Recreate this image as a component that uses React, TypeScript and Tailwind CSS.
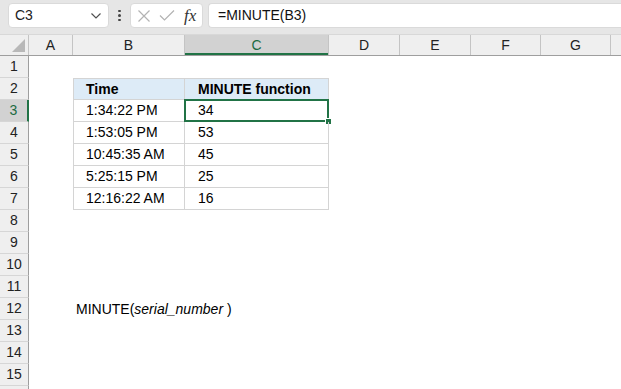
import React from 'react';

const COLS = [
  { key: 'A', w: 'w-[44px]' },
  { key: 'B', w: 'w-[112px]' },
  { key: 'C', w: 'w-[144px]' },
  { key: 'D', w: 'w-[71px]' },
  { key: 'E', w: 'w-[71px]' },
  { key: 'F', w: 'w-[70px]' },
  { key: 'G', w: 'w-[70px]' },
  { key: '', w: 'w-[70px]' },
];

const data: [string, string][] = [
  ['1:34:22 PM', '34'],
  ['1:53:05 PM', '53'],
  ['10:45:35 AM', '45'],
  ['5:25:15 PM', '25'],
  ['12:16:22 AM', '16'],
];

const Chevron = () => (
  <svg width="12" height="8" viewBox="0 0 12 8" fill="none">
    <path d="M1.5 1.5 L6 6 L10.5 1.5" stroke="#505050" strokeWidth="1.2" />
  </svg>
);

const CrossIcon = () => (
  <svg width="14" height="14" viewBox="0 0 14 14" fill="none">
    <path d="M1.5 1.5 L12.5 12.5 M12.5 1.5 L1.5 12.5" stroke="#b3b3b3" strokeWidth="1.2" />
  </svg>
);

const CheckIcon = () => (
  <svg width="16" height="13" viewBox="0 0 16 13" fill="none">
    <path d="M1 6.5 L5.5 11 L15 1.5" stroke="#b3b3b3" strokeWidth="1.2" />
  </svg>
);

const Toolbar = () => (
  <div className="h-[35px] bg-[#e6e6e6] flex items-start pt-[3px] border-b border-[#d8d8d8]">
    <div className="ml-[8px] w-[101px] h-[25px] bg-white rounded-[4px] border border-[#dadada] flex items-center justify-between pl-[6px] pr-[6px] text-[14px] text-[#222]">
      <span>C3</span>
      <Chevron />
    </div>
    <div className="w-[21px] h-[25px] flex flex-col items-center justify-center gap-[2px]">
      <span className="w-[2.5px] h-[2.5px] rounded-full bg-[#444]" />
      <span className="w-[2.5px] h-[2.5px] rounded-full bg-[#444]" />
      <span className="w-[2.5px] h-[2.5px] rounded-full bg-[#444]" />
    </div>
    <div className="w-[73px] h-[25px] bg-white rounded-[4px] border border-[#dadada] flex items-center pl-[6px] gap-[8px]">
      <CrossIcon />
      <CheckIcon />
      <span className="font-['Liberation_Serif',serif] italic text-[17px] text-[#333] leading-none ml-[1px]">fx</span>
    </div>
    <div className="ml-[5px] flex-1 h-[25px] bg-white rounded-l-[4px] border border-r-0 border-[#dadada] flex items-center pl-[9px] text-[14px] text-[#111]">
      =MINUTE(B3)
    </div>
  </div>
);

const HeaderRow = () => (
  <div className="flex h-[21px] bg-[#efefef] border-b border-[#9e9e9e]">
    <div className="w-[29px] shrink-0 border-r border-[#c4c4c4] relative">
      <svg className="absolute right-[3px] bottom-[3px]" width="13" height="13" viewBox="0 0 13 13">
        <polygon points="13,0 13,13 0,13" fill="#b8b8b8" />
      </svg>
    </div>
    {COLS.map((c, i) => (
      <div
        key={i}
        className={`${c.w} shrink-0 flex items-center justify-center text-[14px] border-r ${
          c.key === 'C'
            ? 'bg-[#d2d2d2] text-[#1d6b43] border-[#c4c4c4] shadow-[inset_0_-2px_0_#217346]'
            : 'text-[#222] border-[#c4c4c4]'
        }`}
      >
        {c.key}
      </div>
    ))}
  </div>
);

const RowHeader = ({ n }: { n: number }) => (
  <div
    className={`w-[29px] shrink-0 flex items-center justify-center text-[14px] border-b border-[#d6d6d6] ${
      n === 3
        ? 'bg-[#d2d2d2] text-[#1d6b43] border-r-2 border-r-[#217346]'
        : 'bg-[#efefef] text-[#222] border-r border-r-[#9e9e9e]'
    }`}
  >
    {n <= 15 ? n : ''}
  </div>
);

const tableB = 'border-l border-r border-b border-[#d4d4d4]';
const tableC = 'border-r border-b border-[#d4d4d4]';

const Row = ({ n }: { n: number }) => {
  const inTable = n >= 2 && n <= 7;
  const isHead = n === 2;
  const item = n >= 3 && n <= 7 ? data[n - 3] : null;
  return (
    <div className="flex h-[22px] text-[14px] text-black">
      <RowHeader n={n} />
      <div className="w-[44px] shrink-0" />
      {inTable ? (
        <>
          <div
            className={`w-[112px] shrink-0 flex items-center pl-[12px] ${tableB} ${
              isHead ? 'border-t bg-[#ddebf7] font-bold' : ''
            }`}
          >
            {isHead ? 'Time' : item![0]}
          </div>
          <div
            className={`w-[144px] shrink-0 flex items-center pl-[13px] relative ${tableC} ${
              isHead ? 'border-t bg-[#ddebf7] font-bold' : ''
            }`}
          >
            {isHead ? 'MINUTE function' : item![1]}
            {n === 3 && (
              <div className="absolute -left-[1px] -top-[1px] -right-[1px] -bottom-[1px] border-2 border-[#217346]">
                <div className="absolute -right-[5px] -bottom-[5px] w-[7px] h-[7px] bg-[#217346] border border-white" />
              </div>
            )}
          </div>
        </>
      ) : n === 12 ? (
        <div className="flex items-center pl-[3px] whitespace-nowrap">
          MINUTE(<span className="italic">serial_number</span>&nbsp;)
        </div>
      ) : null}
    </div>
  );
};

export default function App() {
  return (
    <div className="w-[621px] h-[389px] overflow-hidden bg-white font-['Liberation_Sans',Arial,sans-serif]">
      <Toolbar />
      <HeaderRow />
      {Array.from({ length: 16 }, (_, i) => (
        <Row key={i} n={i + 1} />
      ))}
    </div>
  );
}
